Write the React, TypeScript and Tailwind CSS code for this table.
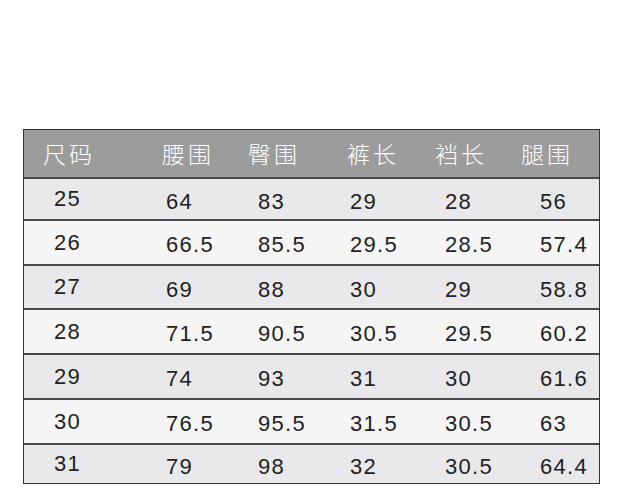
import React from "react";

const headers = ["尺码", "腰围", "臀围", "裤长", "裆长", "腿围"];
const rows = [
  ["25", "64", "83", "29", "28", "56"],
  ["26", "66.5", "85.5", "29.5", "28.5", "57.4"],
  ["27", "69", "88", "30", "29", "58.8"],
  ["28", "71.5", "90.5", "30.5", "29.5", "60.2"],
  ["29", "74", "93", "31", "30", "61.6"],
  ["30", "76.5", "95.5", "31.5", "30.5", "63"],
  ["31", "79", "98", "32", "30.5", "64.4"],
];
const headPad = ["pl-[19px]", "pl-[12px]", "pl-[8px]", "pl-[12px]", "pl-[10px]", "pl-[11px]"];
const cellPad = ["pl-[30px]", "pl-[16px] pt-[5px]", "pl-[18px] pt-[5px]", "pl-[15px] pt-[5px]", "pl-[20px] pt-[5px]", "pl-[30px] pt-[5px]"];
const heights = ["h-[42px]", "h-[45px]", "h-[44px]", "h-[45px]", "h-[45px]", "h-[45px]", "h-[40px]"];

export default function App() {
  return (
    <div className="w-[620px] h-[491px] bg-white pt-[129px] pl-[23px]">
      <div className="w-[577px] border border-[#333] box-border">
        <div className="grid grid-cols-[126px_90px_95px_90px_85px_89px] h-[47px] bg-[#9c9c9c] items-center">
          {headers.map((h, i) => (
            <div
              key={h}
              className={`${headPad[i]} text-white text-[23px] font-light tracking-[3px] leading-none`}
              style={{ fontFamily: '"Noto Sans CJK SC", sans-serif' }}
            >
              {h}
            </div>
          ))}
        </div>
        {rows.map((r, ri) => (
          <div
            key={ri}
            className={`grid grid-cols-[126px_90px_95px_90px_85px_89px] ${heights[ri]} items-center border-t-2 border-[#4a4a4a] ${ri % 2 === 0 ? "bg-[#e9e9eb]" : "bg-[#f5f5f5]"}`}
          >
            {r.map((c, ci) => (
              <div
                key={ci}
                className={`${cellPad[ci]} text-[22px] text-[#222] tracking-[1.3px] leading-none`}
                style={{ fontFamily: '"Liberation Sans", Arial, sans-serif' }}
              >
                {c}
              </div>
            ))}
          </div>
        ))}
      </div>
    </div>
  );
}
